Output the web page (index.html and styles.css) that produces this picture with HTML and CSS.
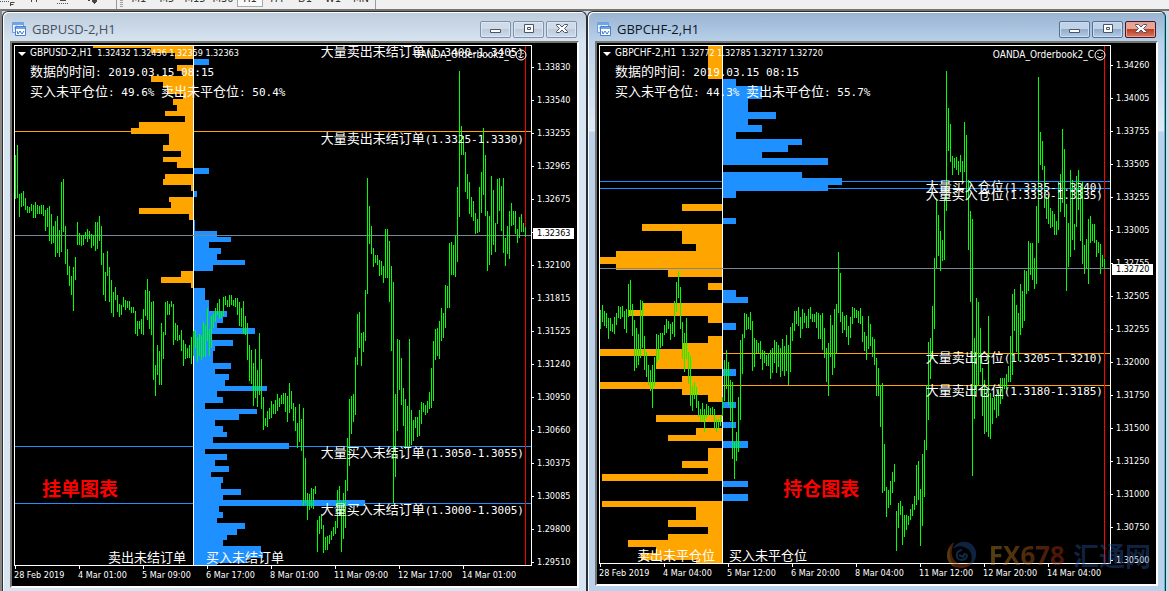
FILE: index.html
```html
<!DOCTYPE html>
<html lang="zh-CN">
<head>
<meta charset="utf-8">
<title>GBPUSD-2,H1 / GBPCHF-2,H1</title>
<link rel="stylesheet" href="styles.css">
</head>
<body>
<div class="toolbar">
  <svg class="tool-icons" viewBox="0 0 116 9" aria-hidden="true"><path d="M0 1.5h10M57 3.5h12" stroke="#555" stroke-dasharray="1 1"/><path d="M10.500 6V2.500h4M10.500 4.500h3M31.500 0v2M36.500 0v2M60 .5h6" stroke="#444" fill="none"/><path d="M88 0h2v1h-2zM92 0h5v2h-1v1h-1v1h-1V3h-1V2h-1z" fill="#444"/></svg>
  <span class="grip"></span>
  <div class="periods">
    <button>M1</button><button>M5</button><button>M15</button><button>M30</button><button class="active">H1</button><button>H4</button><button>D1</button><button>W1</button><button>MN</button>
  </div>
</div>
<main class="desk">
  <section class="window idle">
    <header class="titlebar">
      <svg class="app-icon" viewBox="0 0 14 14" aria-hidden="true"><path d="M.5.500h11v10H.5z" fill="#e8f2ff" stroke="#6f9fe0"/><path d="M1 1h10v2H1z" fill="#6fa3ea"/><path d="M2 6h2V4h1v2h2V4" stroke="#6fa3ea" fill="none"/><path d="M3.500 4.500h10v9h-10z" fill="#fff" stroke="#4c7fd0"/><path d="M4 5h9v2H4z" fill="#6fa3ea"/><path d="M5 9l1 3 2-3 2 3 2-3" stroke="#3f77cc" fill="none"/></svg>
      <h1>GBPUSD-2,H1</h1>
      <button class="ctl" aria-label="Minimize"><svg viewBox="0 0 12 10"><path d="M.5 5.500h10v3H.5z"/></svg></button>
      <button class="ctl" aria-label="Restore"><svg viewBox="0 0 12 10"><path d="M1.500.5h9v8h-9z"/><path d="M4.500 3.500h3v2h-3z"/></svg></button>
      <button class="ctl" aria-label="Close"><svg viewBox="0 0 12 10"><path d="M.5.500h3L6 3 8.500.5h3v1L8.500 4.500l3 3v1h-3L6 6 3.500 8.500h-3v-1l3-3-3-3z"/></svg></button>
    </header>
    <div class="panel">
      <div class="row">
        <div class="plot">
          <svg class="chart" data-chart="orders" viewBox="14 45 518 521" preserveAspectRatio="none" role="img" aria-label="GBPUSD"></svg>
          <p class="quote"><svg viewBox="0 0 8 4" aria-hidden="true"><path d="M0 0h8L4 4z" fill="#fff"/></svg><span>GBPUSD-2,H1</span>&nbsp; 1.32432 1.32436 1.32359 1.32363</p>
          <p class="info">数据的时间<b>: 2019.03.15 08:15</b></p>
          <p class="info">买入未平仓位<b>: 49.6% </b>卖出未平仓位<b>: 50.4%</b></p>
          <p class="expert">OANDA_Orderbook2_C<svg viewBox="0 0 12 12" aria-hidden="true"><circle cx="6" cy="6" r="5"/><path d="M4 4v1M8 4v1M3.500 7.500Q6 10 8.500 7.500"/></svg></p>
          <p class="level l1">大量卖出未结订单<b>(1.3400-1.3405)</b></p>
          <p class="level l2">大量卖出未结订单<b>(1.3325-1.3330)</b></p>
          <p class="level l3">大量买入未结订单<b>(1.3050-1.3055)</b></p>
          <p class="level l4">大量买入未结订单<b>(1.3000-1.3005)</b></p>
          <p class="note">挂单图表</p>
          <div class="sides"><span class="sell">卖出未结订单</span><span class="buy">买入未结订单</span></div>
        </div>
        <div class="prices">
          <span>1.33830</span><span>1.33540</span><span>1.33255</span><span>1.32965</span><span>1.32675</span><span>1.32385</span><span>1.32100</span><span>1.31815</span><span>1.31525</span><span>1.31240</span><span>1.30950</span><span>1.30660</span><span>1.30375</span><span>1.30085</span><span>1.29800</span><span>1.29510</span>
          <strong>1.32363</strong>
        </div>
      </div>
      <div class="times"><span>28 Feb 2019</span><span>4 Mar 01:00</span><span>5 Mar 09:00</span><span>6 Mar 17:00</span><span>8 Mar 01:00</span><span>11 Mar 09:00</span><span>12 Mar 17:00</span><span>14 Mar 01:00</span></div>
    </div>
  </section>

  <section class="window focused">
    <header class="titlebar">
      <svg class="app-icon" viewBox="0 0 14 14" aria-hidden="true"><path d="M.5.500h11v10H.5z" fill="#e8f2ff" stroke="#6f9fe0"/><path d="M1 1h10v2H1z" fill="#6fa3ea"/><path d="M2 6h2V4h1v2h2V4" stroke="#6fa3ea" fill="none"/><path d="M3.500 4.500h10v9h-10z" fill="#fff" stroke="#4c7fd0"/><path d="M4 5h9v2H4z" fill="#6fa3ea"/><path d="M5 9l1 3 2-3 2 3 2-3" stroke="#3f77cc" fill="none"/></svg>
      <h1>GBPCHF-2,H1</h1>
      <button class="ctl" aria-label="Minimize"><svg viewBox="0 0 12 10"><path d="M.5 5.500h10v3H.5z"/></svg></button>
      <button class="ctl" aria-label="Restore"><svg viewBox="0 0 12 10"><path d="M1.500.5h9v8h-9z"/><path d="M4.500 3.500h3v2h-3z"/></svg></button>
      <button class="ctl close" aria-label="Close"><svg viewBox="0 0 12 10"><path d="M.5.500h3L6 3 8.500.5h3v1L8.500 4.500l3 3v1h-3L6 6 3.500 8.500h-3v-1l3-3-3-3z"/></svg></button>
    </header>
    <div class="panel">
      <div class="row">
        <div class="plot">
          <svg class="chart" data-chart="positions" viewBox="599 45 512 519" preserveAspectRatio="none" role="img" aria-label="GBPCHF"></svg>
          <p class="quote"><svg viewBox="0 0 8 4" aria-hidden="true"><path d="M0 0h8L4 4z" fill="#fff"/></svg><span>GBPCHF-2,H1</span>&nbsp; 1.32772 1.32785 1.32717 1.32720</p>
          <p class="info">数据的时间<b>: 2019.03.15 08:15</b></p>
          <p class="info">买入未平仓位<b>: 44.3% </b>卖出未平仓位<b>: 55.7%</b></p>
          <p class="expert">OANDA_Orderbook2_C<svg viewBox="0 0 12 12" aria-hidden="true"><circle cx="6" cy="6" r="5"/><path d="M4 4v1M8 4v1M3.500 7.500Q6 10 8.500 7.500"/></svg></p>
          <p class="level l1">大量买入仓位<b>(1.3335-1.3340)</b></p>
          <p class="level l2">大量买入仓位<b>(1.3330-1.3335)</b></p>
          <p class="level l3">大量卖出仓位<b>(1.3205-1.3210)</b></p>
          <p class="level l4">大量卖出仓位<b>(1.3180-1.3185)</b></p>
          <p class="note">持仓图表</p>
          <div class="sides"><span class="sell">卖出未平仓位</span><span class="buy">买入未平仓位</span></div>
        </div>
        <div class="prices">
          <span>1.34260</span><span>1.34005</span><span>1.33755</span><span>1.33505</span><span>1.33255</span><span>1.33005</span><span>1.32755</span><span>1.32505</span><span>1.32255</span><span>1.32000</span><span>1.31750</span><span>1.31500</span><span>1.31250</span><span>1.31000</span><span>1.30750</span><span>1.30500</span>
          <strong>1.32720</strong>
        </div>
      </div>
      <div class="times"><span>28 Feb 2019</span><span>4 Mar 04:00</span><span>5 Mar 12:00</span><span>6 Mar 20:00</span><span>8 Mar 04:00</span><span>11 Mar 12:00</span><span>12 Mar 20:00</span><span>14 Mar 04:00</span></div>
      <div class="brand"><svg viewBox="0 0 32 30" aria-hidden="true"><path d="M9 2C-2 9 0 27 16 28c8 0 12-4 14-9-5 6-18 8-22-1C5 12 8 6 9 2z" fill="#ad4a18"/><path d="M6 6C-1 13 1 25 12 28 4 22 4 12 6 6z" fill="#c08a20"/><path d="M8 9C12-1 29-1 31 12c1 7-3 12-7 14 4-6 4-15-3-18-5-3-10-2-13 1z" fill="#24549c"/><path d="M17 10c-7 1-7 10 0 10 4 0 6-4 4-6M14 15l4 2 2-4" fill="none" stroke="#2a63a8" stroke-width="2"/></svg><span class="fx">FX678</span><span class="cn">汇通网</span></div>
    </div>
  </section>
</main>
<script src="charts.js"></script>
</body>
</html>
```

FILE: styles.css
```css
* { box-sizing: border-box; }
body {
  margin: 0;
  height: 100vh;
  min-height: 480px;
  display: flex;
  flex-direction: column;
  overflow: hidden;
  background: #f0f0f0;
  font-family: "DejaVu Sans Condensed", "Noto Sans CJK SC", sans-serif;
}
p, h1 { margin: 0; font-weight: normal; }
button { font: inherit; padding: 0; }

.toolbar { height: 9px; flex: none; display: flex; overflow: hidden; }
.tool-icons { width: 116px; height: 9px; flex: none; }
.grip {
  width: 9px;
  flex: none;
  border-left: 1px solid #9a9a9a;
  background: repeating-linear-gradient(#a0a0a0 0 1px, #f0f0f0 1px 2px) 3px 0 / 3px 7px no-repeat;
}
.periods { display: flex; height: 9px; border-right: 1px solid #9a9a9a; }
.periods button {
  width: 28px;
  height: 18px;
  margin-top: -11px;
  border: 0;
  background: none;
  color: #333;
  font-size: 11px;
  line-height: 13px;
}
.periods .active { width: 26px; border: 1px solid #aaa; background: #fafafa; }

.desk {
  flex: 1;
  min-height: 0;
  display: grid;
  grid-template-columns: 585fr 579fr;
  padding-right: 3px;
  border-top: 2px solid #77756f;
  border-left: 2px solid #888;
  background: #cbd9e8;
}
.window {
  min-width: 0;
  display: flex;
  flex-direction: column;
  padding: 0 7px;
  border: 1px solid #2b2f35;
  border-bottom: 0;
  border-radius: 6px 6px 0 0;
  box-shadow: inset 1px 1px #fff;
}
.idle { padding-bottom: 3px; background: linear-gradient(#bdccdb, #d7e4f2 30px); }
.focused {
  padding-bottom: 5px;
  background: linear-gradient(#98b3d1, #b9d1ea 30px, #dfeaf6 119px, #b9d1ea 120px);
  box-shadow: inset 1px 1px #fff, inset -1px 0 #35c8e0;
}
.titlebar {
  height: 29px;
  flex: none;
  display: flex;
  align-items: center;
  gap: 2px;
  padding: 5px 2px 0 2px;
}
.app-icon { width: 14px; height: 14px; }
.titlebar h1 {
  flex: 1;
  padding-left: 4px;
  color: #46515e;
  font: 13px/16px "Open Sans", sans-serif;
}
.focused h1 { color: #0c1624; }
.ctl {
  width: 31px;
  height: 17px;
  display: grid;
  place-items: center;
  border: 1px solid #7f8fac;
  border-radius: 2px;
  background: linear-gradient(#cfdbe8 45%, #bccbdc 50%, #cddbea);
  box-shadow: inset 0 0 0 1px #dce7f2;
}
.ctl svg { width: 12px; height: 10px; fill: #fff; stroke: #4b5468; }
.focused .ctl { border-color: #566f92; background: linear-gradient(#c0d3e8 45%, #93adca 50%, #b3cbe4); box-shadow: inset 0 0 0 1px #cbdcee; }
.focused .close { border-color: #4a1620; background: linear-gradient(#e6a597 45%, #bd3d21 50%, #d67a61); box-shadow: inset 0 0 0 1px #e5a296; }

.panel {
  position: relative;
  flex: 1;
  min-height: 0;
  display: flex;
  flex-direction: column;
  padding: 2px 0 0 2px;
  border: 2px solid #fff;
  border-top-color: #77756f;
  border-left-color: #77756f;
  background: #000;
  color: #fff;
  font-size: 9px;
  line-height: 12px;
  white-space: nowrap;
}
.row { flex: 1; min-height: 0; display: flex; }
.plot { position: relative; flex: 1; min-width: 0; padding: 2px 0 0 16px; overflow: hidden; }
.chart { position: absolute; left: 0; top: 0; width: 100%; height: 100%; shape-rendering: crispEdges; }
.quote, .info, .expert, .level, .note, .sides { position: relative; }
.quote span { font-size: 10px; }
.quote svg { position: absolute; left: -12px; top: 5px; width: 8px; height: 4px; }
.info, .level, .sides { height: 16px; font: 13px/16px "Noto Sans CJK SC", sans-serif; }
.info { margin-top: 4px; }
.info b, .level b { font: 11px/12px "DejaVu Sans Mono", monospace; }
.expert { position: absolute; right: 5px; top: 4px; display: flex; align-items: center; font-size: 10px; }
.expert svg { width: 12px; height: 12px; fill: none; stroke: #fff; }
.level { position: absolute; right: 8px; margin-top: -2px; }
.idle .l1 { top: 0; }
.idle .l2 { top: 17%; margin-top: -4px; }
.idle .l3 { top: 77%; }
.idle .l4 { top: 88%; }
.focused .l1 { top: 26%; }
.focused .l2 { top: 28%; margin-top: -4px; }
.focused .l3 { top: 59%; }
.focused .l4 { top: 65%; margin-top: 0; }
.note { position: absolute; left: 28px; top: 83%; margin-top: -1px; color: #f00; font: bold 19px/24px "Noto Sans CJK SC", sans-serif; }
.focused .note { left: 36%; margin-top: 0; }
.sides { position: absolute; left: 0; right: 0; bottom: 1px; display: grid; grid-template-columns: 180fr 338fr; }
.focused .sides { grid-template-columns: 124fr 388fr; }
.sell { justify-self: end; padding-right: 8px; }
.buy { padding-left: 12px; }
.focused .buy { padding-left: 6px; }

.prices {
  position: relative;
  width: 45px;
  flex: none;
  display: flex;
  flex-direction: column;
  justify-content: space-between;
  padding-top: 16px;
  margin-bottom: -2px;
}
.focused .prices { padding-top: 14px; }
.prices span { display: flex; align-items: center; gap: 3px; }
.prices span::before { content: ""; width: 2px; height: 1px; background: #fff; }
.prices strong {
  position: absolute;
  left: 1px;
  top: 35%;
  width: 41px;
  height: 11px;
  padding-left: 4px;
  background: #fff;
  color: #000;
  font-weight: normal;
  line-height: 11px;
}
.focused .prices strong { top: 42%; }
.times { height: 20px; flex: none; display: flex; }
.times span { width: 64px; flex: none; }
.times span::before { content: ""; display: block; width: 1px; height: 3px; margin-left: 1px; background: #fff; }

.brand { position: absolute; right: 5px; bottom: 14px; display: flex; align-items: center; opacity: .42; line-height: 30px; }
.brand svg { width: 32px; height: 30px; margin-right: 12px; }
.fx {
  margin-right: 8px;
  font: bold 26px/30px "Open Sans", sans-serif;
  background: linear-gradient(90deg, #c99a28, #b85a18 60%, #b02c10);
  background-clip: text;
  -webkit-background-clip: text;
  color: transparent;
}
.cn { color: #24549c; font: bold 26px/30px "Noto Sans CJK SC", sans-serif; }
```

FILE: charts.js
```js
// Bars: [top, bottom, outer edge]. Candles: high and low alternating, one candle every 2 units.
const charts = {
  orders: {
    box: [14, 45, 531, 565], axis: 193, now: 235, red: 525,
    levels: [[131, "#ffa500"], [446, "#1e90ff"], [503, "#1e90ff"]],
    sell: [[46,48,93],[48,53,151],[53,59,175],[65,71,177],[71,76,183],[76,82,151],[82,88,163],[88,94,167],[94,99,183],[99,105,173],[105,111,177],[111,116,165],[116,122,185],[122,128,139],[128,134,131],[134,145,169],[145,151,163],[151,157,181],[157,162,163],[162,168,177],[174,179,165],[179,185,163],[185,191,191],[197,202,169],[202,208,171],[208,214,139],[214,220,189],[271,277,181],[277,283,161],[283,288,191]],
    buy: [[59,65,209],[168,174,209],[191,197,197],[220,231,195],[231,237,217],[237,242,231],[242,248,209],[248,254,221],[254,260,217],[260,265,245],[265,271,213],[288,300,205],[300,311,209],[311,317,227],[317,323,223],[323,328,217],[328,334,255],[334,340,212],[340,346,233],[346,351,215],[351,363,213],[363,369,231],[369,374,215],[374,380,229],[380,386,225],[386,391,267],[391,397,217],[397,403,223],[403,409,205],[409,414,257],[414,420,239],[420,426,215],[426,432,223],[432,437,227],[437,443,213],[443,449,289],[449,454,205],[454,460,227],[460,466,215],[466,472,229],[472,477,211],[477,483,223],[483,489,221],[489,495,241],[495,500,223],[500,506,365],[506,512,219],[512,518,223],[518,523,217],[523,529,245],[529,535,237],[535,540,227],[540,546,223],[546,552,261],[552,558,263],[558,563,247],[563,565,217]],
    candles: [155,199,145,198,194,217,193,207,191,206,198,210,206,213,207,213,204,211,205,218,202,218,205,214,206,214,205,214,205,216,210,231,208,227,206,241,214,244,226,243,221,257,216,253,230,257,182,252,179,232,226,264,249,275,266,286,276,295,267,311,257,280,222,245,233,245,235,246,235,245,232,239,229,242,231,239,234,248,235,246,222,251,222,249,216,241,226,265,253,295,272,301,251,276,267,302,280,313,292,317,287,300,295,312,304,317,305,315,297,307,300,310,301,308,301,310,307,313,307,313,311,334,321,336,321,329,319,334,309,335,290,316,279,320,291,329,302,335,301,380,365,396,345,375,351,385,323,385,332,359,302,335,301,315,304,315,301,307,304,345,323,340,325,341,335,340,330,351,340,366,344,359,348,358,345,358,337,364,331,356,330,348,337,362,334,356,335,360,322,357,325,357,308,341,329,356,316,348,314,328,308,322,303,315,299,319,311,318,297,316,296,305,300,307,295,307,295,305,300,306,298,307,298,315,302,326,308,327,301,334,316,335,323,360,345,381,350,384,363,406,349,398,370,407,333,395,359,409,397,430,418,426,411,427,408,419,401,418,404,414,400,414,394,411,398,407,395,404,393,404,393,412,396,422,383,413,391,409,403,421,407,431,423,448,404,442,419,451,408,506,458,503,493,520,494,510,488,508,489,509,486,494,520,552,516,534,514,529,525,553,537,550,536,550,535,544,531,540,527,536,521,534,490,528,486,516,502,552,493,539,480,528,438,491,399,466,396,434,394,422,357,415,314,365,312,348,333,366,332,352,290,341,178,294,206,244,226,254,248,267,255,263,255,265,260,276,261,275,266,283,229,278,229,278,241,302,266,351,282,503,394,477,339,431,340,390,358,405,388,426,399,449,406,448,339,448,410,445,420,441,417,428,417,437,410,436,402,424,403,412,405,415,401,413,392,409,368,408,341,401,329,360,328,356,321,359,308,341,313,338,285,328,286,308,243,308,242,275,245,275,236,277,187,262,71,217,126,155,136,155,152,192,174,199,182,214,197,217,201,221,213,234,219,233,187,232,172,213,128,195,155,216,211,271,216,265,176,255,190,245,223,252,179,224,178,211,186,231,178,253,238,266,226,254,211,259,203,226,211,225,211,234,229,243,217,238,214,232,223,232,227,237]
  },
  positions: {
    box: [599, 45, 1110, 563], axis: 722, now: 268, red: 1104,
    levels: [[181, "#1e90ff"], [188, "#1e90ff"], [353, "#ffa500"], [385, "#ffa500"]],
    sell: [[46,79,708],[204,211,682],[224,231,642],[231,244,682],[244,251,696],[251,257,616],[257,264,600],[264,270,616],[270,277,668],[283,290,708],[303,310,643],[310,316,629],[316,323,708],[336,343,708],[343,349,682],[349,356,600],[356,369,656],[376,382,682],[382,389,600],[389,395,682],[395,402,708],[415,422,656],[428,435,696],[435,441,668],[448,461,708],[461,468,682],[468,474,708],[474,481,602],[501,507,602],[507,520,696],[520,527,668],[527,534,708],[534,540,668],[540,547,628],[547,553,656],[553,560,641],[560,563,696]],
    buy: [[79,86,736],[86,99,762],[99,112,748],[112,119,776],[119,125,748],[125,132,762],[132,139,736],[139,145,802],[145,152,788],[152,158,762],[158,165,828],[172,178,802],[178,185,842],[185,191,828],[191,198,736],[218,224,736],[290,297,736],[297,303,748],[323,330,736],[369,376,736],[402,408,736],[422,428,736],[441,448,748],[481,487,748],[494,501,748]],
    candles: [310,329,305,322,311,326,313,328,318,339,318,331,324,332,317,334,313,325,306,318,307,319,306,317,311,329,309,333,284,317,280,315,304,336,320,371,328,368,334,365,300,358,301,348,336,370,352,377,365,385,370,391,365,408,357,386,334,363,335,360,333,348,333,346,325,335,319,333,321,329,324,340,322,334,301,337,282,312,271,298,287,329,322,359,333,372,318,359,352,384,356,406,386,411,382,399,387,408,401,417,409,422,403,421,409,432,404,418,406,415,408,415,407,415,409,429,419,432,419,428,416,426,397,416,360,401,350,389,362,405,380,421,382,459,442,479,432,461,397,452,340,420,334,374,313,338,314,330,317,329,312,330,321,371,338,367,340,353,343,353,341,359,350,370,351,363,355,366,353,366,350,379,348,373,340,363,342,373,345,367,348,377,339,371,346,376,335,371,345,385,327,372,323,341,311,331,311,324,307,326,317,338,309,329,313,323,316,328,309,328,307,319,314,322,314,322,312,328,313,339,315,339,313,350,328,358,348,382,343,396,315,357,325,375,309,368,304,353,252,313,273,322,312,333,316,330,315,337,326,345,317,338,307,324,308,318,310,318,311,323,308,324,316,342,332,351,336,360,316,349,324,346,337,357,339,365,358,396,368,396,385,427,383,493,444,491,487,517,490,508,481,505,472,493,464,482,511,551,503,528,501,515,506,545,515,537,515,530,516,525,509,520,504,516,496,510,465,505,461,500,489,546,454,526,440,497,385,450,342,420,338,379,306,359,258,329,200,268,215,256,231,271,240,261,199,260,71,211,108,151,124,162,156,175,158,168,157,170,161,175,155,172,161,181,122,172,135,199,180,250,211,302,219,476,338,419,298,391,302,385,328,372,368,416,380,434,394,432,316,437,393,439,398,424,397,410,394,418,389,416,378,404,378,399,378,389,374,389,366,382,336,382,294,375,289,331,305,352,313,361,284,335,291,328,270,321,271,294,241,291,243,275,243,280,258,289,206,284,77,243,132,165,141,170,166,208,197,219,196,224,208,228,211,227,214,235,221,235,182,230,174,212,129,203,149,217,204,291,223,267,170,257,180,240,224,250,176,227,170,210,187,241,182,264,245,274,239,268,219,284,216,243,224,241,224,243,240,257,242,253,244,274,255,267,259,269]
  }
};

const rect = (x, y, w, h) => `M${x} ${y}h${w}v${h}h${-w}z`;
const path = (d, fill) => `<path fill="${fill}" d="${d}"/>`;

document.querySelectorAll(".chart").forEach((svg) => {
  const c = charts[svg.dataset.chart];
  const [x0, y0, x1, y1] = c.box;
  const w = x1 - x0;
  const h = y1 - y0;
  let candles = "";
  for (let i = 0; i < c.candles.length; i += 2) {
    candles += rect(x0 + 1 + i, c.candles[i], 1, c.candles[i + 1] - c.candles[i]);
  }
  svg.innerHTML =
    c.levels.map(([y, color]) => path(rect(x0, y, w, 1), color)).join("") +
    path(c.sell.map(([t, b, x]) => rect(x, t, c.axis - x, b - t)).join(""), "#ffa500") +
    path(c.buy.map(([t, b, x]) => rect(c.axis, t, x - c.axis, b - t)).join(""), "#1e90ff") +
    path(rect(c.axis, y0, 1, h), "#fff") +
    path(rect(x0, c.now, w, 1), "#778899") +
    path(rect(c.red, y0, 1, h), "#f00") +
    path(candles, "#0f0") +
    path(rect(x0, y0, w + 1, 1) + rect(x0, y1, w + 1, 1) + rect(x0, y0, 1, h) + rect(x1, y0, 1, h), "#fff");
});
```
